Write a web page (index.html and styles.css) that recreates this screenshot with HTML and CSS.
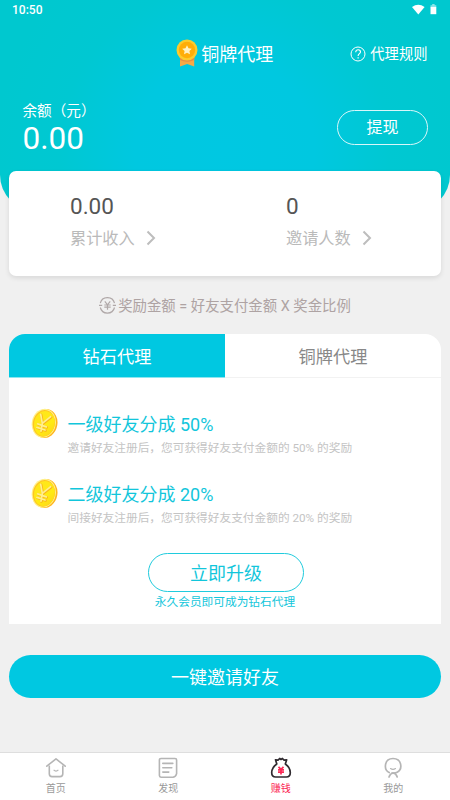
FILE: index.html
```html
<!DOCTYPE html>
<html lang="zh-CN">
<head>
<meta charset="utf-8">
<meta name="viewport" content="width=device-width, initial-scale=1">
<title>铜牌代理</title>
<link rel="stylesheet" href="styles.css">
</head>
<body>
<svg class="defs" width="0" height="0" aria-hidden="true">
  <defs>
    <linearGradient id="coinFace" x1="0" y1="0" x2="1" y2="1">
      <stop offset="0" stop-color="#ffe51f"/><stop offset=".6" stop-color="#ffeb12"/><stop offset="1" stop-color="#ffd21a"/>
    </linearGradient>
    <symbol id="coin" viewBox="0 0 27 31">
      <ellipse cx="14.2" cy="15.5" rx="12.2" ry="14.6" fill="#ffb41e" transform="rotate(12 14.2 15.5)"/>
      <ellipse cx="12.8" cy="15.2" rx="12" ry="14.6" fill="#fff08a" transform="rotate(12 12.8 15.2)"/>
      <ellipse cx="12.9" cy="15.3" rx="11" ry="13.4" fill="#ffc423" transform="rotate(12 12.9 15.3)"/>
      <ellipse cx="13.4" cy="15.6" rx="10.4" ry="12.7" fill="url(#coinFace)" transform="rotate(12 13.4 15.6)"/>
      <g fill="none" stroke-linecap="round" stroke-linejoin="round">
        <path d="M10.200 6.800l1.600 9 8.400-6.600M11.800 15.800l-1.300 7.800M7.200 16.400l8.600 3M6.400 19.900l8.200 2.600" stroke="#f9b51b" stroke-width="2.500"/>
        <path d="M9.700 6.300l1.600 9 8.400-6.600M11.300 15.300L10 23.100M6.700 15.900l8.600 3M5.900 19.400l8.200 2.600" stroke="#fff08e" stroke-width="1.700"/>
      </g>
    </symbol>
  </defs>
</svg>
<div class="page">
  <header class="hero">
    <div class="status">
      <span>10:50</span>
      <svg width="26" height="12" viewBox="0 0 26 12" fill="#fff"><path d="M0 3Q6.3-1.7 12.6 3L6.3 10.5z"/><path d="M18.5 1.2H20.2V0h2.4v1.2h1.7v2h-5.8z" opacity=".55"/><path d="M18.5 3h5.800v7.200h-5.800z"/></svg>
    </div>
    <div class="titlebar">
      <h1 class="title">
        <svg width="22" height="30" viewBox="0 0 22 30"><path d="M4 18h14.2v9.5l-7-2.5-7.2 2.5z" fill="#f7a945"/><path d="M4 21q7 3.5 14.2 0v-3H4z" fill="#e98b45"/><circle cx="11" cy="11" r="10.5" fill="#fccb2e"/><circle cx="11" cy="11" r="8.2" fill="#ffad08"/><path d="M11 6.2l1.500 3 3.300.500-2.400 2.300.600 3.300-3-1.600-3 1.600.600-3.300-2.400-2.300 3.300-.500z" fill="#fff1c5"/></svg>
        <span>铜牌代理</span>
      </h1>
      <a class="rules">
        <svg width="16" height="16" viewBox="0 0 16 16" fill="none" stroke="#fff"><circle cx="8" cy="8" r="7" stroke-width="1"/><path d="M5.700 6.200c0-3.300 4.800-3.100 4.800-.200C10.500 7.700 8.100 7.700 8.100 10" stroke-width="1.100"/><path d="M8.100 11.300v1.300" stroke-width="1.200"/></svg>
        <span>代理规则</span>
      </a>
    </div>
    <div class="balance">
      <div>
        <div class="balance-label">余额（元）</div>
        <div class="balance-value">0.00</div>
      </div>
      <button class="withdraw">提现</button>
    </div>
  </header>

  <section class="stats">
    <div class="stat">
      <div class="stat-value">0.00</div>
      <div class="stat-label"><span>累计收入</span><svg width="10" height="16" viewBox="0 0 10 16"><path d="M1.500 1.500L8 8l-6.500 6.500" fill="none" stroke="#bdbdbd" stroke-width="2"/></svg></div>
    </div>
    <div class="stat">
      <div class="stat-value">0</div>
      <div class="stat-label"><span>邀请人数</span><svg width="10" height="16" viewBox="0 0 10 16"><path d="M1.500 1.500L8 8l-6.500 6.500" fill="none" stroke="#bdbdbd" stroke-width="2"/></svg></div>
    </div>
  </section>

  <p class="formula">
    <svg width="17" height="17" viewBox="0 0 17 17" fill="none" stroke="#b0a8a8" stroke-width="1.200"><path d="M1.300 6.200A7.300 7.300 0 0 1 15.500 6.200M15.500 10.500A7.300 7.300 0 0 1 1.300 10.500M0 8.300h3.200M13.800 8.300h3.200"/><path d="M5.800 4.400l2.700 3.400 2.700-3.400M5.300 8h6.400M5.300 10.200h6.400M8.500 7.800v5"/></svg>
    <span>奖励金额 = 好友支付金额 X 奖金比例</span>
  </p>

  <section class="plan">
    <div class="tabs">
      <div class="tab active">钻石代理</div>
      <div class="tab">铜牌代理</div>
    </div>
    <div class="benefits">
      <div class="benefit">
        <svg class="coin" width="27" height="31"><use href="#coin"/></svg>
        <div>
          <h2>一级好友分成 50%</h2>
          <p>邀请好友注册后，您可获得好友支付金额的 50% 的奖励</p>
        </div>
      </div>
      <div class="benefit">
        <svg class="coin" width="27" height="31"><use href="#coin"/></svg>
        <div>
          <h2>二级好友分成 20%</h2>
          <p>间接好友注册后，您可获得好友支付金额的 20% 的奖励</p>
        </div>
      </div>
    </div>
    <button class="upgrade">立即升级</button>
    <p class="note">永久会员即可成为钻石代理</p>
  </section>

  <button class="invite">一键邀请好友</button>

  <nav class="nav">
    <a class="nav-item">
      <svg width="22" height="22" viewBox="0 0 22 22" fill="none" stroke="#b5b5b5" stroke-width="1.600" stroke-linejoin="round"><path d="M1.800 9.200L11 1.800l9.200 7.400" stroke-linecap="round"/><path d="M4.300 8.500v8.300Q4.300 19.600 7 19.600h8q2.800 0 2.800-2.800V8.500"/><path d="M8.600 12.800q2.400 2.600 4.800 0" stroke-width="1.100"/></svg>
      <span>首页</span>
    </a>
    <a class="nav-item">
      <svg width="22" height="22" viewBox="0 0 22 22" fill="none" stroke="#b5b5b5" stroke-width="1.600" stroke-linecap="round"><path d="M4 1.500h14q1.600 0 1.600 1.600v13.500q-.500 3-3.500 3.600H4q-1.600 0-1.600-1.600V3.100q0-1.600 1.600-1.600z"/><path d="M5.800 6.400h10M5.800 10.700h9M5.800 15.100h6"/></svg>
      <span>发现</span>
    </a>
    <a class="nav-item current">
      <svg width="22" height="22" viewBox="0 0 22 22" fill="none" stroke="#302b30" stroke-width="1.700" stroke-linejoin="round"><path d="M6.800 7L5.500 2.800 8 3.200 9.700 1.500 11 2.500l1.400-1 1.700 1.700 2.600-.400L15.300 7c2.500 1.700 5 5.300 5 8.800 0 3-1.300 4.200-4 4.200H5.700c-2.700 0-4-1.200-4-4.200 0-3.500 2.600-7.100 5.100-8.800z"/><path d="M8.500 9.800l2.500 2.600 2.500-2.600M8 12.800h6M8 15.100h6M11 12v5.600" stroke="#fb2855" stroke-width="1.700"/></svg>
      <span>赚钱</span>
    </a>
    <a class="nav-item">
      <svg width="22" height="22" viewBox="0 0 22 22" fill="none" stroke="#b5b5b5" stroke-width="1.700" stroke-linecap="round"><path d="M7.200 15.600C1.300 12.600 2.200 1.500 11 1.500s10 10.500 4.200 13.800Q13.300 16.400 10 16.100"/><path d="M7 20q1.200-3.400 4-4 3.200.500 4.200 4"/><path d="M8.500 11.500q2.500 1.800 5 0" stroke-width="1.100"/></svg>
      <span>我的</span>
    </a>
  </nav>
</div>
</body>
</html>
```

FILE: styles.css
```css
* { box-sizing: border-box; }
body {
  margin: 0;
  background: #f0f0f0;
  font-family: Roboto, "Noto Sans CJK SC", sans-serif;
}
h1, h2, p { margin: 0; font-weight: 400; }
button { font-family: inherit; padding: 0; cursor: pointer; }
svg { display: block; flex: none; }
.defs { position: absolute; }
.page {
  display: flex;
  flex-direction: column;
  width: 450px;
  height: 800px;
  overflow: hidden;
  white-space: nowrap;
}

.hero {
  flex: none;
  height: 211px;
  border-radius: 0 0 36px 36px;
  background: radial-gradient(circle at 225px 150px, #00c8e2 0, #00c8e0 90px, #00c8d2 165px, #00c8cf 230px);
  color: #fff;
}
.status {
  display: flex;
  justify-content: space-between;
  align-items: center;
  height: 20px;
  padding: 0 12px;
  font-size: 12px;
  font-weight: 500;
}
.titlebar {
  display: grid;
  grid-template-columns: 1fr auto 1fr;
  align-items: center;
  height: 68px;
  padding: 0 22.500px 0 22px;
}
.title {
  grid-column: 2;
  display: flex;
  align-items: center;
  gap: 3px;
  font-size: 18px;
  line-height: 28px;
}
.title svg { margin-top: -1px; }
.title span { padding-top: 2px; }
.rules {
  justify-self: end;
  display: flex;
  align-items: center;
  gap: 4px;
  font-size: 14.300px;
  line-height: 20px;
}
.balance {
  display: flex;
  justify-content: space-between;
  padding: 12px 22px 0 22.500px;
}
.balance-label { padding-top: 1px; font-size: 14.600px; line-height: 20px; }
.balance-value { font-size: 31.500px; line-height: 36px; }
.withdraw {
  width: 91px;
  height: 35px;
  margin-top: 10px;
  border: 1px solid #d9f7fa;
  border-radius: 18px;
  background: none;
  color: #fff;
  font-size: 16px;
  line-height: 34px;
}

.stats {
  flex: none;
  display: grid;
  grid-template-columns: 1fr 1fr;
  height: 105px;
  margin: -40px 9px 0;
  padding-top: 20px;
  border-radius: 7px;
  background: #fff;
  box-shadow: 0 2px 5px rgba(0, 0, 0, .1);
}
.stat { padding-left: 61px; }
.stat-value { color: #555; font-size: 22.500px; line-height: 31px; }
.stat-label {
  display: flex;
  align-items: center;
  gap: 11px;
  height: 32px;
  color: #bababa;
  font-size: 16.200px;
  line-height: 30px;
}
.stat-label span { padding-top: 2px; }

.formula {
  flex: none;
  display: flex;
  justify-content: center;
  align-items: center;
  gap: 2px;
  height: 58px;
  color: #aea3a3;
  font-size: 14.400px;
}
.formula span { padding-bottom: 1px; }

.plan {
  flex: none;
  height: 290px;
  margin: 0 9px;
  border-radius: 16px 16px 0 0;
  background: #fff;
  overflow: hidden;
  text-align: center;
}
.tabs { display: grid; grid-template-columns: 1fr 1fr; }
.tab {
  height: 44px;
  border-bottom: 1px solid #f2f2f2;
  color: #888;
  font-size: 17.200px;
  line-height: 46px;
}
.tab.active { border-color: #8ee5ef; background: #00c8e1; color: #fff; }
.benefits { padding: 30px 0 0 22px; }
.benefit { display: flex; gap: 9.500px; height: 70px; text-align: left; }
.benefit h2 { padding-top: 1px; color: #12c6db; font-size: 18px; line-height: 32px; }
.benefit p { color: #c4c4c4; font-size: 11.700px; line-height: 15px; }
.upgrade {
  display: block;
  width: 156px;
  height: 39px;
  margin: 5px 0 0 139px;
  border: 1px solid #20cbdd;
  border-radius: 20px;
  background: #fff;
  color: #12c6db;
  font-size: 18px;
  line-height: 40px;
}
.note { color: #12c6db; font-size: 11.700px; line-height: 21px; }

.invite {
  flex: none;
  height: 43px;
  margin: 31px 9px 0;
  border: 0;
  border-radius: 22px;
  background: #00c8e1;
  color: #fff;
  font-size: 18px;
  line-height: 45px;
}

.nav {
  flex: none;
  display: grid;
  grid-template-columns: repeat(4, 1fr);
  height: 48px;
  margin-top: auto;
  border-top: 1px solid #dedede;
  background: #fff;
}
.nav-item {
  display: flex;
  flex-direction: column;
  align-items: center;
  padding: 4px 1px 0 0;
  color: #999;
  font-size: 10px;
  line-height: 18px;
}
.nav-item span { padding-top: 1px; }
.nav-item.current { color: #fb2855; }
```
